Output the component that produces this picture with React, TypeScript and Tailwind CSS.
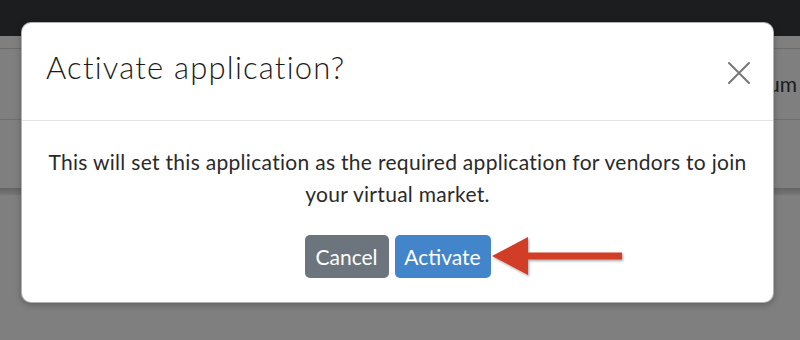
const font = { fontFamily: "Lato, 'Noto Sans', sans-serif" }

function Background() {
  return (
    <div className="flex h-full w-full flex-col bg-white">
      {/* navbar */}
      <div className="h-[36px] bg-[#383a3f]" />
      <div className="h-[13px] border-b border-[#d8d8d8] bg-white" />
      {/* table header row */}
      <div className="flex h-[71px] items-center justify-end border-b border-[#dcdcdc]">
        <span className="pr-[3px] text-[21px] text-[#3a3a3a]">um</span>
      </div>
      <div className="h-[68px]" />
      <div className="h-[7px] bg-gradient-to-b from-[#c8c8c8] to-[#ececec]" />
      <div className="flex-1 bg-white" />
    </div>
  )
}

function CloseIcon() {
  return (
    <svg width="24" height="24" viewBox="0 0 24 24" fill="none" stroke="#777" strokeWidth="2" strokeLinecap="round">
      <path d="M2 2 L22 22 M22 2 L2 22" />
    </svg>
  )
}

function ArrowPointer() {
  return (
    <svg width="134" height="44" viewBox="0 0 134 44">
      <defs>
        <filter id="sh" x="-10%" y="-20%" width="130%" height="150%">
          <feDropShadow dx="1" dy="1.5" stdDeviation="0.8" floodColor="#000" floodOpacity="0.35" />
        </filter>
      </defs>
      <path
        d="M1 22 L37 3 L37 18.5 L131 18.5 L131 25.5 L37 25.5 L37 41 Z"
        fill="#d13c26"
        filter="url(#sh)"
      />
    </svg>
  )
}

export default function App() {
  return (
    <div className="relative h-[340px] w-[800px] overflow-hidden" style={font}>
      <Background />

      {/* overlay */}
      <div className="absolute inset-0 bg-black/50" />

      {/* modal */}
      <div className="absolute left-[21px] top-[22px] flex h-[281px] w-[753px] flex-col rounded-[10px] border border-black/30 bg-white shadow-[0_2px_6px_rgba(0,0,0,0.25)]">
        <div className="flex h-[98px] shrink-0 items-start justify-between border-b border-[#e3e3e3] pl-[24px] pr-[22px] pt-[26px]">
          <h2 className="text-[31px] font-light leading-[36px] tracking-[1.2px] text-[#1a1a1a]">Activate application?</h2>
          <button className="mt-[12px]">
            <CloseIcon />
          </button>
        </div>

        <div className="flex flex-1 flex-col items-center px-[20px] pt-[25px]">
          <p className="text-center text-[21px] leading-[32px] tracking-[0.3px] text-[#2a2a2a]">
            This will set this application as the required application for vendors to join your virtual market.
          </p>
          <div className="mt-[25px] flex items-center gap-[6px]">
            <button className="h-[43px] w-[84px] rounded-[5px] bg-[#6c757d] text-[21px] text-white">
              Cancel
            </button>
            <div className="relative">
              <button className="h-[43px] w-[96px] rounded-[5px] bg-[#4285ca] text-[21px] text-white">
                Activate
              </button>
              <div className="absolute left-[96px] top-[-1px]">
                <ArrowPointer />
              </div>
            </div>
          </div>
        </div>
      </div>
    </div>
  )
}
